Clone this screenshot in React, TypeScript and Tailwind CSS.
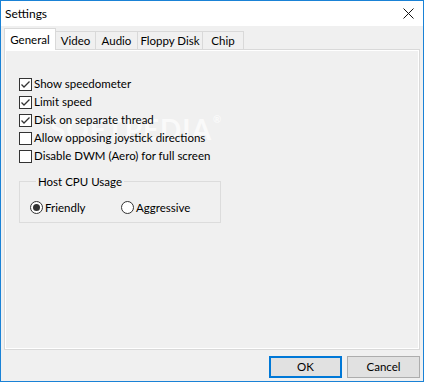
import React from "react";

const font = { fontFamily: '"Segoe UI", Lato, "Liberation Sans", sans-serif' };

function Check({ checked, label }: { checked: boolean; label: string }) {
  return (
    <div className="flex h-[18px] items-center">
      <span className="flex h-[13px] w-[13px] items-center justify-center border border-[#333333] bg-white">
        {checked && (
          <svg width="11" height="11" viewBox="0 0 11 11" fill="none" stroke="#333333" strokeWidth="1.3">
            <polyline points="1.5,5.5 4,8 9.5,2.5" />
          </svg>
        )}
      </span>
      <span className="ml-[2px] whitespace-nowrap">{label}</span>
    </div>
  );
}

function Radio({ checked, label }: { checked: boolean; label: string }) {
  return (
    <div className="flex h-[18px] w-[91px] items-center">
      <span className="flex h-[13px] w-[13px] items-center justify-center rounded-full border border-[#333333] bg-white">
        {checked && <span className="h-[7px] w-[7px] rounded-full bg-[#333333]" />}
      </span>
      <span className="ml-[2px]">{label}</span>
    </div>
  );
}

const tabs = [
  { name: "Video", w: "w-[41px]" },
  { name: "Audio", w: "w-[43px]" },
  { name: "Floppy Disk", w: "w-[66px]" },
  { name: "Chip", w: "w-[42px]" },
];

export default function App() {
  return (
    <div
      className="flex h-[382px] w-[424px] flex-col border border-[#1a82d6] text-[11.5px] text-black"
      style={font}
    >
      <div className="flex h-[25px] items-center justify-between bg-white pl-[4px] pr-[9px] text-[12px]">
        <span>Settings</span>
        <svg width="11" height="11" viewBox="0 0 11 11" stroke="#111111" strokeWidth="1">
          <line x1="0.5" y1="0.5" x2="10.5" y2="10.5" />
          <line x1="10.5" y1="0.5" x2="0.5" y2="10.5" />
        </svg>
      </div>

      <div className="flex flex-1 flex-col bg-[#f0f0f0] pl-[3px] pr-[3px] pt-[2px] pb-[3px]">
        <div className="flex h-[21px] items-end">
          <div className="relative z-10 -mb-px flex h-[22px] w-[52px] items-center justify-center border border-b-0 border-[#d9d9d9] bg-white">
            General
          </div>
          {tabs.map((t) => (
            <div
              key={t.name}
              className={`-ml-px flex h-[18px] items-center justify-center whitespace-nowrap border border-b-0 border-[#d9d9d9] bg-[#f0f0f0] ${t.w}`}
            >
              {t.name}
            </div>
          ))}
        </div>

        <div className="flex h-[301px] flex-col border border-[#d9d9d9] bg-white p-px">
          <div className="relative flex flex-1 flex-col bg-[#f0f0f0]">
            <div className="pointer-events-none absolute left-[44px] top-[57px] flex items-start text-[28px] font-bold tracking-[1px] text-white/70">
              SOFTPEDIA
              <span className="ml-[1px] mt-[4px] text-[10px]">®</span>
            </div>

            <div className="relative flex flex-col pl-[13px] pt-[24px]">
              <Check checked label="Show speedometer" />
              <Check checked label="Limit speed" />
              <Check checked label="Disk on separate thread" />
              <Check checked={false} label="Allow opposing joystick directions" />
              <Check checked={false} label="Disable DWM (Aero) for full screen" />

              <fieldset className="mt-[8px] w-[202px] border border-[#dcdcdc] pb-[6px] pl-[10px]">
                <legend className="ml-[6px] px-[2px]">Host CPU Usage</legend>
                <div className="mt-[8px] flex">
                  <Radio checked label="Friendly" />
                  <Radio checked={false} label="Aggressive" />
                </div>
              </fieldset>
            </div>
          </div>
        </div>

        <div className="mt-[6px] flex justify-end gap-[5px]">
          <button className="flex h-[22px] w-[73px] items-center justify-center border-2 border-[#0078d7] bg-[#e1e1e1]">
            OK
          </button>
          <button className="flex h-[22px] w-[73px] items-center justify-center border border-[#adadad] bg-[#e1e1e1]">
            Cancel
          </button>
        </div>
      </div>
    </div>
  );
}
